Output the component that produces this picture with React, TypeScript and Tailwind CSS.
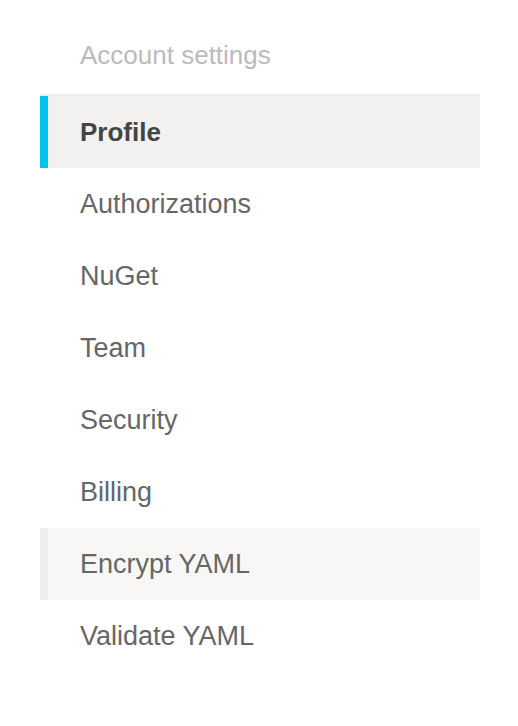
import React from "react";

const items = [
  { name: "Profile", state: "active" },
  { name: "Authorizations" },
  { name: "NuGet" },
  { name: "Team" },
  { name: "Security" },
  { name: "Billing" },
  { name: "Encrypt YAML", state: "hover" },
  { name: "Validate YAML" },
];

const App = () => {
  return (
    <div className="min-h-[726px] w-[518px] bg-white pl-10 pt-[34px] font-['Liberation_Sans',Arial,sans-serif]">
      <div className="w-[440px]">
        <h3 className="pl-10 text-[26px] leading-[42px] text-[#bbbbbb]">
          Account settings
        </h3>
        <nav className="mt-[18px] border-t-2 border-[#ebebeb]">
          {items.map((item, index) => (
            <div
              key={index}
              className={
                item.state === "active"
                  ? "flex h-[72px] items-center border-l-8 border-[#00c3ec] bg-[#f2f1f0] pl-8 text-[26px] font-bold text-[#444444]"
                  : item.state === "hover"
                  ? "flex h-[72px] items-center border-l-8 border-[#ededed] bg-[#f8f7f6] pl-8 text-[27px] text-[#666666]"
                  : "flex h-[72px] items-center pl-10 text-[27px] text-[#666666]"
              }
            >
              {item.name}
            </div>
          ))}
        </nav>
      </div>
    </div>
  );
};

export default App;
